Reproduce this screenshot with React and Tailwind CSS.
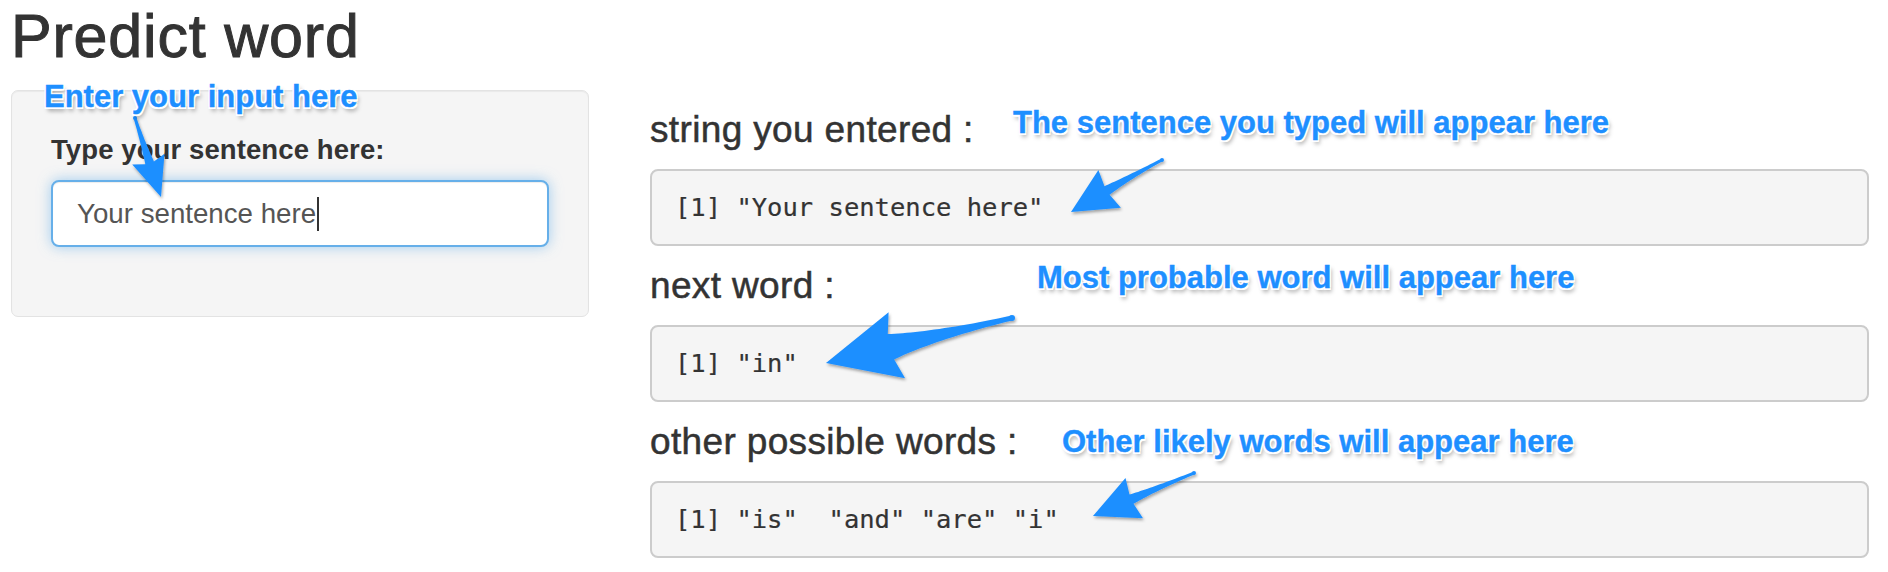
import React from "react";

const sans = "font-['Liberation_Sans','Helvetica_Neue',Arial,sans-serif]";
const mono = "font-['DejaVu_Sans_Mono','Liberation_Mono',monospace]";

// tapered, slightly curved "Skitch" style arrow
function arrowPath({ tail, ctrl, tip, head, half, w0, w1, sweep = 0 }) {
  const dx = tip[0] - ctrl[0];
  const dy = tip[1] - ctrl[1];
  const len = Math.hypot(dx, dy);
  const ux = dx / len;
  const uy = dy / len;
  const nx = -uy;
  const ny = ux;
  const base = [tip[0] - ux * head, tip[1] - uy * head];
  const left = [];
  const right = [];
  const N = 24;
  for (let i = 0; i <= N; i++) {
    const t = i / N;
    const a = (1 - t) * (1 - t);
    const b = 2 * (1 - t) * t;
    const d = t * t;
    const x = a * tail[0] + b * ctrl[0] + d * base[0];
    const y = a * tail[1] + b * ctrl[1] + d * base[1];
    const tx = 2 * (1 - t) * (ctrl[0] - tail[0]) + 2 * t * (base[0] - ctrl[0]);
    const ty = 2 * (1 - t) * (ctrl[1] - tail[1]) + 2 * t * (base[1] - ctrl[1]);
    const tl = Math.hypot(tx, ty);
    const px = -ty / tl;
    const py = tx / tl;
    const w = (w0 + (w1 - w0) * Math.pow(t, 1.6)) / 2;
    left.push([x + px * w, y + py * w]);
    right.push([x - px * w, y - py * w]);
  }
  const wingL = [base[0] + nx * half - ux * sweep, base[1] + ny * half - uy * sweep];
  const wingR = [base[0] - nx * half - ux * sweep, base[1] - ny * half - uy * sweep];
  const pts = [...left, wingL, tip, wingR, ...right.reverse()];
  return "M" + pts.map((p) => p[0].toFixed(1) + " " + p[1].toFixed(1)).join(" L") + " Z";
}

const arrows = [
  { tail: [135, 118], ctrl: [142, 140], tip: [161, 197], head: 36, half: 17, w0: 3, w1: 9, sweep: 4 },
  { tail: [1162, 160], ctrl: [1128, 178], tip: [1071, 212], head: 42, half: 22, w0: 3, w1: 10, sweep: 3 },
  { tail: [1012, 318], ctrl: [930, 337], tip: [826, 363], head: 67, half: 34, w0: 5, w1: 26, sweep: 6 },
  { tail: [1194, 473], ctrl: [1155, 489], tip: [1093, 516], head: 42, half: 22, w0: 3, w1: 10, sweep: 3 },
];

const notes = [
  { text: "Enter your input here", cls: "left-[44px] top-[81px]" },
  { text: "The sentence you typed will appear here", cls: "left-[1013px] top-[107px]" },
  { text: "Most probable word will appear here", cls: "left-[1037px] top-[262px]" },
  { text: "Other likely words will appear here", cls: "left-[1062px] top-[426px]" },
];

function Output({ label, value }) {
  return (
    <div>
      <h3 className="text-[37px] leading-[40px] tracking-[0.35px] text-[#333] font-normal [-webkit-text-stroke:0.5px_#333] mb-[19px]">
        {label}
      </h3>
      <div className="h-[77px] flex items-center px-[23px] bg-[#f5f5f5] border-2 border-[#cccccc] rounded-[8px]">
        <pre className={`${mono} text-[25.5px] text-[#333] whitespace-pre [-webkit-text-stroke:0.2px_#333]`}>{value}</pre>
      </div>
    </div>
  );
}

export default function App() {
  return (
    <div className={`${sans} relative w-[1888px] h-[572px] bg-white overflow-hidden pl-[11px] pr-[19px]`}>
      <h1 className="text-[61px] leading-[66px] tracking-[0.8px] pt-[3px] text-[#333] font-normal [-webkit-text-stroke:1px_#333]">
        Predict word
      </h1>

      <div className="flex items-start mt-[21px]">
        <div className="w-[578px] shrink-0 bg-[#f5f5f5] border border-[#e3e3e3] rounded-[7px] shadow-[inset_0_1px_1px_rgba(0,0,0,0.05)] px-[39px] pt-[44px] pb-[69px]">
          <label className="block text-[27.5px] leading-[30px] tracking-[0.1px] font-bold text-[#333] mb-[15px]">
            Type your sentence here:
          </label>
          <div className="h-[67px] flex items-center bg-white border-2 border-[#66afe9] rounded-[8px] pl-[24px] shadow-[inset_0_1px_1px_rgba(0,0,0,0.075),0_0_13px_rgba(102,175,233,0.6)]">
            <span className="text-[27.7px] text-[#555] leading-none">Your sentence here</span>
            <span className="w-[2px] h-[34px] bg-[#333] ml-[1px]" />
          </div>
        </div>

        <div className="flex-1 ml-[61px] pt-[20px] flex flex-col gap-[20px]">
          <Output label="string you entered :" value={'[1] "Your sentence here"'} />
          <Output label="next word :" value={'[1] "in"'} />
          <Output label="other possible words :" value={'[1] "is"  "and" "are" "i"'} />
        </div>
      </div>

      <svg className="absolute left-0 top-0 pointer-events-none" width="1888" height="572" viewBox="0 0 1888 572">
        <defs>
          <filter id="arrowShadow" x="-20%" y="-20%" width="140%" height="140%">
            <feDropShadow dx="1" dy="2" stdDeviation="1.5" floodColor="#000" floodOpacity="0.35" />
          </filter>
        </defs>
        {arrows.map((a, i) => (
          <g key={i} filter="url(#arrowShadow)">
            <path d={arrowPath(a)} fill="#1e8fff" strokeLinejoin="round" />
            <circle cx={a.tail[0]} cy={a.tail[1]} r={a.w0 / 2 + 0.5} fill="#1e8fff" />
          </g>
        ))}
      </svg>

      {notes.map((n) => (
        <div
          key={n.text}
          className={`absolute ${n.cls} pointer-events-none whitespace-nowrap text-[31px] leading-[31px] font-bold text-[#1e8fff] [-webkit-text-stroke:0.4px_#1e8fff] [text-shadow:1.5px_1.5px_0_#fff,-1.5px_-1.5px_0_#fff,1.5px_-1.5px_0_#fff,-1.5px_1.5px_0_#fff,0_2px_0_#fff,2px_4px_4px_rgba(0,0,0,0.35)]`}
        >
          {n.text}
        </div>
      ))}
    </div>
  );
}
